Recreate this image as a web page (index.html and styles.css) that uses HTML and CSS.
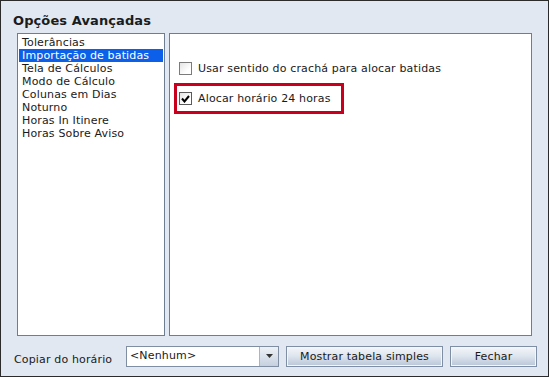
FILE: index.html
```html
<!DOCTYPE html>
<html lang="pt">
<head>
  <meta charset="UTF-8" />
  <title>Opções Avançadas</title>
  <link rel="stylesheet" href="styles.css">
</head>
<body>
  <div class="janela">
    <h1 class="titulo">Opções Avançadas</h1>

    <div class="conteudo">
      <ul class="lista">
        <li>Tolerâncias</li>
        <li class="selecionado">Importação de batidas</li>
        <li>Tela de Cálculos</li>
        <li>Modo de Cálculo</li>
        <li>Colunas em Dias</li>
        <li>Noturno</li>
        <li>Horas In Itinere</li>
        <li>Horas Sobre Aviso</li>
      </ul>

      <div class="painel">
        <label class="opcao">
          <span class="caixa"></span>
          Usar sentido do crachá para alocar batidas
        </label>
        <div class="destaque">
          <label class="opcao">
            <span class="caixa marcada">
              <svg width="9" height="8" viewBox="0 0 9 8"><path d="M1 3.5 L3.5 6.5 L8 1" fill="none" stroke="#000" stroke-width="2"/></svg>
            </span>
            Alocar horário 24 horas
          </label>
        </div>
      </div>
    </div>

    <div class="rodape">
      <span class="rotulo">Copiar do horário</span>
      <div class="combo">
        <span class="combo-texto">&lt;Nenhum&gt;</span>
        <span class="combo-seta">
          <svg width="7" height="4" viewBox="0 0 7 4"><path d="M0 0 L7 0 L3.5 4 Z" fill="#333"/></svg>
        </span>
      </div>
      <button class="botao botao-largo">Mostrar tabela simples</button>
      <button class="botao botao-fechar">Fechar</button>
    </div>
  </div>
</body>
</html>
```

FILE: styles.css
```css
body {
  margin: 0;
  font-family: 'DejaVu Sans', Verdana, sans-serif;
  font-size: 11px;
  letter-spacing: 0.15px;
  color: #1a1a1a;
}

.janela {
  width: 549px;
  height: 377px;
  box-sizing: border-box;
  border: 1px solid #2b2b2b;
  background-color: #e1e8f1;
  padding: 0 0 0 12px;
  display: flex;
  flex-direction: column;
}

.titulo {
  margin: 12px 0 0 0;
  height: 20px;
  font-size: 13px;
  font-weight: bold;
  color: #1c1c1c;
  letter-spacing: 0.1px;
}

.conteudo {
  display: flex;
  gap: 4px;
  margin-left: 4px;
  height: 303px;
}

.lista {
  list-style: none;
  margin: 0;
  padding: 2px 0 0 0;
  width: 148px;
  box-sizing: border-box;
  border: 1px solid #6e7d90;
  background: #fff;
}

.lista li {
  height: 13px;
  line-height: 13px;
  padding-left: 3px;
  margin: 0 1px;
  white-space: nowrap;
}

.lista li.selecionado {
  background-color: #0b5fe8;
  color: #fff;
}

.painel {
  width: 363px;
  box-sizing: border-box;
  border: 1px solid #6e7d90;
  background: #fff;
  padding: 28px 0 0 4px;
}

.opcao {
  display: flex;
  align-items: center;
  gap: 6px;
  height: 13px;
  padding-left: 5px;
  white-space: nowrap;
}

.caixa {
  width: 11px;
  height: 11px;
  border: 1px solid #7b7b7b;
  background: linear-gradient(135deg, #e4e4e4, #fff 70%);
  display: flex;
  align-items: center;
  justify-content: center;
}

.caixa.marcada {
  border-color: #5a5a5a;
}

.destaque {
  margin-top: 8px;
  width: 170px;
  height: 31px;
  box-sizing: border-box;
  border: 3px solid #c8001e;
  display: flex;
  align-items: center;
}

.destaque .opcao {
  padding-left: 2px;
}

.rodape {
  display: flex;
  align-items: center;
  height: 40px;
}

.rotulo {
  width: 112px;
  margin-left: 1px;
  margin-top: 6px;
}

.combo {
  display: flex;
  width: 153px;
  height: 21px;
  box-sizing: border-box;
  border: 1px solid #7f8ea3;
  background: #fff;
}

.combo-texto {
  flex: 1;
  padding: 2px 0 0 3px;
}

.combo-seta {
  width: 18px;
  border-left: 1px solid #a9b5c6;
  background: linear-gradient(#eef2f7, #c5d0df);
  display: flex;
  align-items: center;
  justify-content: center;
}

.botao {
  height: 21px;
  box-sizing: border-box;
  border: 1px solid #7e8ea5;
  box-shadow: inset 0 0 0 1px #f3f6fa;
  background: linear-gradient(#f4f6f9 0%, #dfe6ef 45%, #b9c6d8 100%);
  font-family: inherit;
  font-size: 11px;
  letter-spacing: 0.15px;
  color: #1a1a1a;
  padding: 0;
  margin-left: 7px;
}

.botao-largo {
  width: 157px;
}

.botao-fechar {
  width: 87px;
}
```
